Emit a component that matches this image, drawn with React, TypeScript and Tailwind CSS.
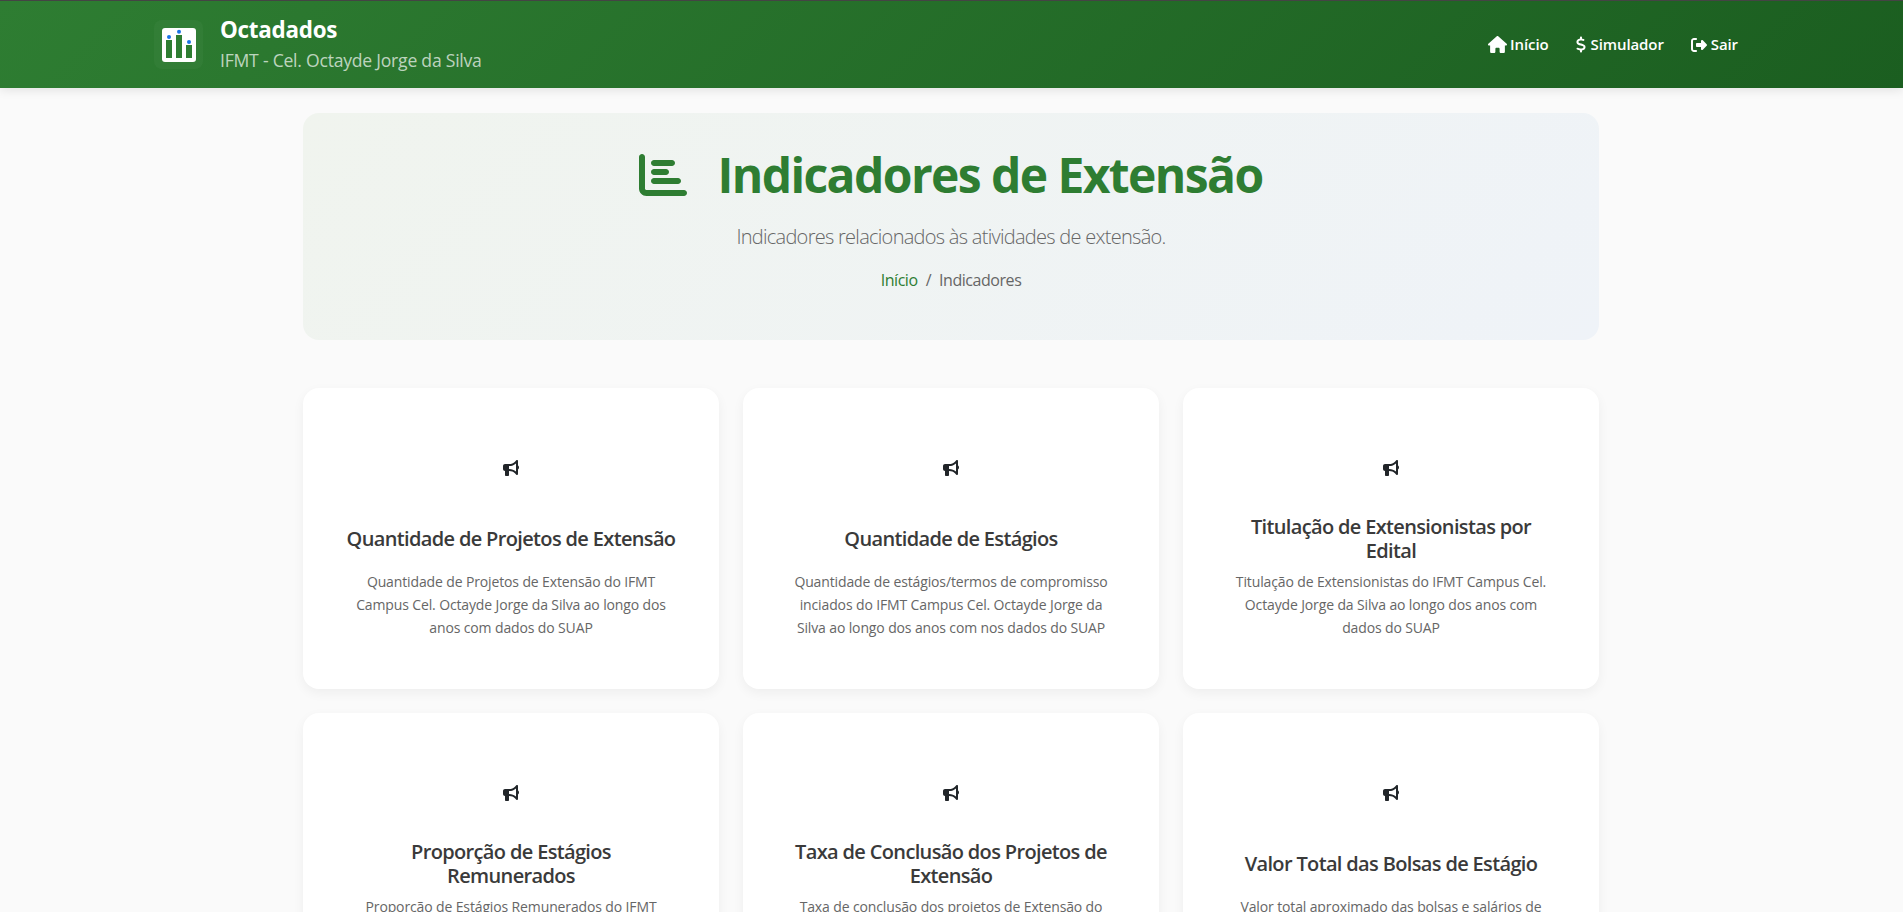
import { FaBullhorn, FaChartBar, FaDollarSign, FaHouse, FaRightFromBracket } from "react-icons/fa6";

const cards = [
  {
    title: "Quantidade de Projetos de Extensão",
    text: "Quantidade de Projetos de Extensão do IFMT Campus Cel. Octayde Jorge da Silva ao longo dos anos com dados do SUAP",
  },
  {
    title: "Quantidade de Estágios",
    text: "Quantidade de estágios/termos de compromisso inciados do IFMT Campus Cel. Octayde Jorge da Silva ao longo dos anos com nos dados do SUAP",
  },
  {
    title: "Titulação de Extensionistas por Edital",
    text: "Titulação de Extensionistas do IFMT Campus Cel. Octayde Jorge da Silva ao longo dos anos com dados do SUAP",
  },
  {
    title: "Proporção de Estágios Remunerados",
    text: "Proporção de Estágios Remunerados do IFMT Campus Cel. Octayde Jorge da Silva ao longo dos anos com dados do SUAP",
  },
  {
    title: "Taxa de Conclusão dos Projetos de Extensão",
    text: "Taxa de conclusão dos projetos de Extensão do IFMT Campus Cel. Octayde Jorge da Silva ao longo dos anos com dados do SUAP",
  },
  {
    title: "Valor Total das Bolsas de Estágio",
    text: "Valor total aproximado das bolsas e salários de estágio do IFMT Campus Cel. Octayde Jorge da Silva ao longo dos anos",
  },
];

function Logo() {
  return (
    <svg viewBox="0 0 34 34" className="h-[34px] w-[34px]">
      <rect width="34" height="34" rx="3" fill="#fff" />
      <rect x="4" y="12" width="6" height="18" fill="#2e7d32" />
      <rect x="14" y="7" width="6" height="23" fill="#2e7d32" />
      <rect x="24" y="17" width="6" height="13" fill="#2e7d32" />
      <circle cx="7" cy="9" r="2" fill="#1a73e8" />
      <circle cx="17" cy="3.8" r="2" fill="#1a73e8" />
      <circle cx="27" cy="14" r="2" fill="#1a73e8" />
    </svg>
  );
}

export default function App() {
  return (
    <div className="h-screen overflow-hidden bg-[#fafafa] font-['Open_Sans',sans-serif] text-[#333]">
      {/* navbar */}
      <nav className="flex h-[88px] items-center justify-between border-t border-t-[#444] bg-linear-135 from-[#2e7d32] to-[#1b5e20] pr-[165px] pl-[154px] shadow-[0_2px_10px_rgba(0,0,0,0.1)]">
        <div className="flex items-center gap-[17px]">
          <div className="flex h-[49px] w-[49px] items-center justify-center rounded-lg bg-white/3">
            <Logo />
          </div>
          <div>
            <div className="text-[22.4px] leading-[30px] font-bold tracking-[-0.25px] text-white">Octadados</div>
            <div className="text-[17.6px] leading-[30px] tracking-[-0.24px] text-white/70">
              IFMT - Cel. Octayde Jorge da Silva
            </div>
          </div>
        </div>
        <div className="flex items-center gap-[27px] text-[15px] font-semibold tracking-[-0.1px] text-white">
          <a className="flex items-center gap-[3px]">
            <FaHouse className="h-[19px] w-[19px]" />
            Início
          </a>
          <a className="flex items-center gap-[5px]">
            <FaDollarSign className="h-[17px] w-[10px]" />
            Simulador
          </a>
          <a className="flex items-center gap-[4px]">
            <FaRightFromBracket className="h-[16px] w-[16px]" />
            Sair
          </a>
        </div>
      </nav>

      <main className="mt-[25px] ml-[303px] w-[1296px]">
        {/* cabeçalho */}
        <section className="rounded-2xl bg-linear-135 from-[#f0f4ee] to-[#eff3f8] pt-[33px] pb-[49px] text-center">
          <h1 className="flex items-center justify-center gap-[30px] text-[48px] leading-[58px] font-bold tracking-[-1.6px] text-[#2e7d32]">
            <FaChartBar className="text-[48px]" />
            Indicadores de Extensão
          </h1>
          <p className="mt-[18px] text-[20px] leading-[30px] font-light tracking-[-0.72px] text-[#666]">
            Indicadores relacionados às atividades de extensão.
          </p>
          <div className="mt-[17px] flex justify-center gap-2 text-[16px] leading-[22px] tracking-[-0.45px] text-[#666]">
            <a className="text-[#2e7d32]">Início</a>
            <span>/</span>
            <span>Indicadores</span>
          </div>
        </section>

        {/* cards */}
        <div className="mt-[48px] grid grid-cols-3 gap-6">
          {cards.map((card) => (
            <div
              key={card.title}
              className="flex h-[301px] flex-col items-center rounded-2xl bg-white px-[40px] pt-[48px] text-center shadow-[0_4px_12px_rgba(0,0,0,0.05)]">
              <div className="flex h-[64px] items-center justify-center text-[16px] text-[#212529]">
                <FaBullhorn />
              </div>
              <h3 className="mt-[15px] flex h-[48px] w-[330px] items-center justify-center text-[20px] leading-[24px] font-semibold tracking-[-0.65px] text-[#3a3a3a]">
                {card.title}
              </h3>
              <p className="mt-[7px] w-[320px] text-[14px] leading-[23px] tracking-[-0.13px] text-[#666]">{card.text}</p>
            </div>
          ))}
        </div>
      </main>
    </div>
  );
}
